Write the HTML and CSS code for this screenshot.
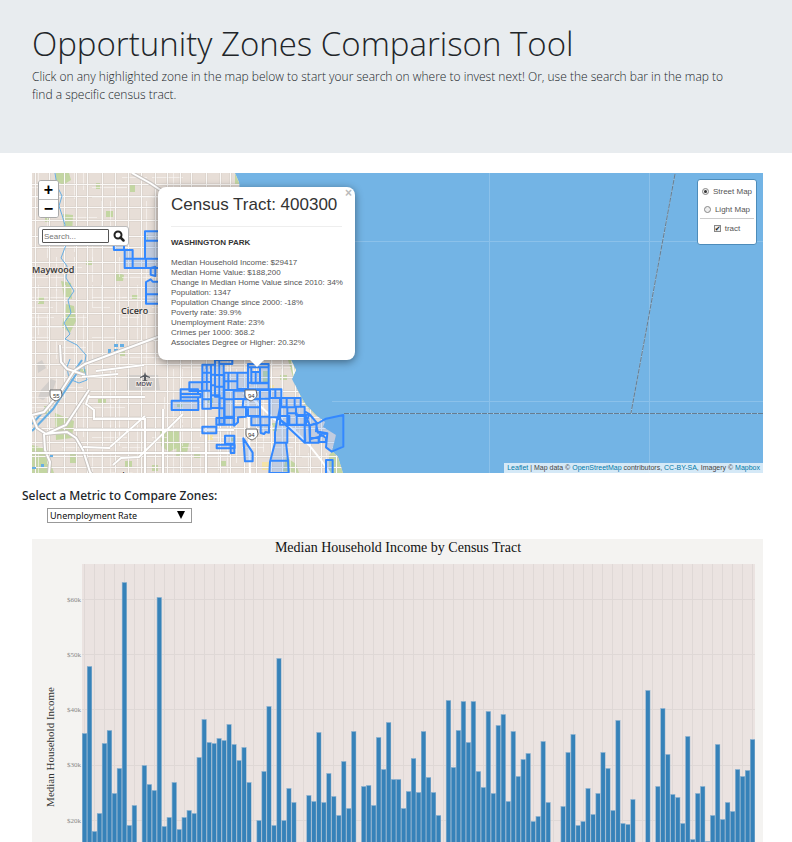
FILE: index.html
```html
<!DOCTYPE html>
<html lang="en">
<head>
<meta charset="utf-8">
<title>Opportunity Zones Comparison Tool</title>
<link rel="stylesheet" href="styles.css">
</head>
<body>
<header class="hero">
  <h1>Opportunity Zones Comparison Tool</h1>
  <p>Click on any highlighted zone in the map below to start your search on where to invest next! Or, use the search bar in the map to find a specific census tract.</p>
</header>
<main>
  <section class="map" aria-label="Map">
    <svg class="tiles" viewBox="0 0 731 300" preserveAspectRatio="xMinYMin slice" aria-hidden="true">
      <defs>
        <clipPath id="land"><path d="M0 0H203L207 9 209 30 225 80 246 150 259 187 264 197 260 206 267 220 274 232 285 243 293 249 291 254 304 262 300 278 306 284 311 300H0Z"/></clipPath>
      </defs>
      <rect width="731" height="300" fill="#73b4e5"/>
      <g clip-path="url(#land)">
        <rect width="320" height="300" fill="#e7ded7"/>
        <g class="park">
          <path d="M24 0h13l2 7-8 5-7-4zM31 41l10 1-1 20-8-2zM33 54l10 3-3 12-7-2zM29 108l10 2 1 16-8-2zM34 131l8 2 2 15-6 12-8-6zM0 272l14 4 8 24H0zM23 240l19 8-2 17-16 2zM128 258l19-3v19l-10 5-8-6zM145 269l12 1-2 10-11 4zM254 180h8l5 25 13 25 8 9-4 4-12-12-9-20zM297 282l7-7 7 25h-14zM254 284l10 7 3 9-16-2zM203 0l5 12h-5zM74 38h7v6h-7zM84 99l8 3-1 6h-8zM6 124h6v7H6zM231 198h6v13h-6zM248 202h7v5h-7zM12 233h6v8h-6z"/>
          <path d="M98 12h5v7h-5zM54 88h6v4h-6zM112 62h4v6h-4zM66 226h8v5h-8zM93 288h7v6h-7zM162 280h7v5h-7zM48 196h6v5h-6zM176 225h5v5h-5zM13 42h5v7h-5zM100 122h6v4h-6zM64 10h4v6h-4zM88 178h5v5h-5zM145 230h6v4h-6zM198 262h5v6h-5zM240 250h5v8h-5zM38 280h6v10h-6zM120 292h6v6h-6zM188 288h6v5h-6z"/>
        </g>
        <path d="M9 217l10-11 5 2-4 12-9 7-5-2zM5 190l5-3 4 8-8 5zM95 202h31l2 15H95z" fill="#d2cecb"/>
        <path d="M230 289h7v8h-7zM176 262h5v5h-5zM236 212h6v4h-6z" fill="#f4e3a8"/>
        <g id="streets" class="streets"></g>
        <g class="river">
          <path d="M23 0l2 13 5 10-3 10 3 9 3 10-4 8 5 12-5 13 6 8-1 12 8 13-6 9 3 13-7 10 6 11-5 5 12 6 9 10-2 13 3 12-8 3-10-4-2-12 3-8"/>
          <path class="canal" d="M0 258L21 236 51 191 87 178 126 164M0 251L21 228 50 187"/>
        </g>
        <path d="M82 171h4v3h-4zM88 171h4v3h-4zM82 176h4v3h-4zM76 176h3v4h-3zM0 294h4v2H0zM9 291h3v3H9zM18 282h3v2h-3z" fill="#66aee3"/>
        <path class="road-case" d="M28 172l1 17 6 7 18 6M0 242l12-3 16-19 14-22 11-7 78-29M0 243l5 12 9 6 8-1 13-1 9 6 7 12 7 22 9 11M12 261l1 16 5 12-1 11M100 0l18 10 27 18M14 261l20-9 23-35"/>
        <path class="road" d="M28 172l1 17 6 7 18 6M0 242l12-3 16-19 14-22 11-7 78-29M0 243l5 12 9 6 8-1 13-1 9 6 7 12 7 22 9 11M12 261l1 16 5 12-1 11M100 0l18 10 27 18M14 261l20-9 23-35M211 220l12 8 19 18 19 10 16 16 12 15 9 13M216 220l2 80M260 187l4 25 12 20 16 12"/>
        <path class="minor-case" d="M57 222l-3 9 8 6v9h51v54M113 243l-35 31M78 275l-27-1M151 241l-44 43-18 1-8 7M50 204l36-3M112 192l-48 6M57 224h56M131 236v64M174 196v104M0 280h200M42 257h160"/>
        <path class="minor" d="M57 222l-3 9 8 6v9h51v54M113 243l-35 31M78 275l-27-1M151 241l-44 43-18 1-8 7M50 204l36-3M112 192l-48 6M57 224h56M131 236v64M174 196v104M0 280h200M42 257h160"/>
      </g>
      <path class="tile-lines" d="M457.500 0V300M617.500 0V300M204 68.500H731M300 228.500H731"/>
      <path class="state-light" d="M643 1L599 240M312 240.500H731"/>
      <path class="state" d="M643 1L599 240M312 240.500H731"/>
      <g class="zones" transform="translate(128 177) scale(.333333)">
        <path d="M88 97h38v26H88zM62 118h52v14H62zM62 132h60v10H62zM62 142h52v10H62zM35 152h80v28H35z"/>
        <path d="M127 44h13v24h-13zM140 44h13v24h-13zM127 68h13v28h-13zM140 68h13v28h-13zM127 96h13v26h-13zM140 96h13v26h-13zM127 122h26v26h-26zM127 148h26v28h-26zM153 44h12v30h-12zM165 30h13v45h-13zM178 42h13v33h-13zM178 30h39v12h-39zM153 74h12v32h-12zM165 75h13v35h-13zM178 75h13v35h-13zM153 106h12v30h-12zM165 110h13v30h-13zM178 110h13v35h-13zM153 136h26v38h-26zM178 145h15v30h-15zM178 175h15v48h-15z"/>
        <path d="M193 68h12v26h-12zM205 68h27v26h-27zM193 94h12v26h-12zM205 94h27v26h-27zM193 120h28v28h-28zM193 148h28v52h-28zM221 122h36v25h-36zM232 68h32v49h-32zM222 172h36v28l-24 2v15l-12 10zM169 204h24v20h-24zM193 204h28v20h-28zM127 230h42v20h-42zM195 257h28v24h-28zM170 284h54v11h-54zM212 281h11v28h-11z"/>
        <path d="M264 42h62v10h-62zM264 52h10v46h-10zM274 66h13v34h-13zM287 66h13v34h-13zM300 52h26v48h-26zM264 98h62v20h-62zM256 120h44v26h-44zM300 120h28v26h-28zM330 118h16v26h-16zM346 118h18v26h-18zM250 148h50v24l-52-1zM264 172h36v26h-36zM274 200h27v26h-27zM301 200h27v26h-27zM328 144h32v28l-6 30h-26zM302 226h25v22l-10-2-5 6-10-3z"/>
        <path d="M364 144h16v26h-16zM380 144h24v28h-24zM404 144h18v26h-18zM360 172h22v26h-22zM382 172h26v18h-26zM408 170h26v25h-26zM360 198h28v26h-28zM382 190h28v34h-28zM410 198h24v26h-24zM352 204l30 22v52h-37v-30zM355 205l27 20h52v53zM434 184l14 8-12 34zM448 192l22 26-20 8-14-30zM434 225l14 1 2 52h-14zM450 226l18-4 6 26 26 2-22 10-28 8zM450 264h26v14h-26zM480 252l18 12v12h-22zM470 222l28-16 52-11v95l-35 15-17-13 4-42-34-6zM345 278h33l6 52 2 39h-58l2-34zM330 332h54M250 265l28 43v26h-23zM498 330h20v42h-20z"/>
      </g>
      <g class="zones" transform="translate(-2 -3) scale(.333333)">
        <path d="M345 184h55v28h-55zM345 212h55v54h-55zM250 210h32v30h-30zM284 240h24v26h-24zM284 266h24v28h-24zM308 266h40v28h-40zM348 266h45v28h-45zM362 294l14-4v28l-14-4zM348 336l14-8 6 7h30v38h-50zM348 373h50v28h-50z"/>
      </g>
      <g class="shield"><path d="M18 217h11l1 5c-1 4-4 5-6 6-3-1-6-3-6-6zM213 217h11l1 5c-1 4-4 5-6 6-3-1-6-3-6-6zM214 256h11l1 5c-1 4-4 5-6 6-3-1-6-3-6-6z"/><text x="21" y="225">55</text><text x="216" y="225">94</text><text x="216" y="264">94</text></g>
      <path d="M113 199l1 3 4 2v1l-4-1v3l2 1h-6l2-1v-3l-4 1v-1l4-2z" fill="#565a60"/>
      <g class="places"><text x="0" y="100">Maywood</text><text x="89" y="141">Cicero</text><text x="78" y="306">Oak Lawn</text><text class="air" x="104" y="213">MDW</text></g>
    </svg>

    <div class="left-controls">
      <div class="zoom"><button type="button" aria-label="Zoom in">+</button><button type="button" aria-label="Zoom out">−</button></div>
      <form class="search"><input type="text" placeholder="Search..." aria-label="Search census tract"><button type="button" aria-label="Search"><svg viewBox="0 0 12 12" width="12" height="12"><circle cx="5" cy="5" r="3.500" fill="none" stroke="#222" stroke-width="2"/><path d="M7.500 7.500l3 3" stroke="#222" stroke-width="2.500" stroke-linecap="round"/></svg></button></form>
    </div>

    <article class="popup">
      <button type="button" class="close" aria-label="Close">×</button>
      <h2>Census Tract: 400300</h2>
      <hr>
      <h3>WASHINGTON PARK</h3>
      <p>Median Household Income: $29417<br>Median Home Value: $188,200<br>Change in Median Home Value since 2010: 34%<br>Population: 1347<br>Population Change since 2000: -18%<br>Poverty rate: 39.9%<br>Unemployment Rate: 23%<br>Crimes per 1000: 368.2<br>Associates Degree or Higher: 20.32%</p>
    </article>

    <form class="layers">
      <label><input type="radio" name="base" checked>Street Map</label>
      <label><input type="radio" name="base">Light Map</label>
      <hr>
      <label><input type="checkbox" checked>tract</label>
    </form>
    <div class="credit"><a href="#">Leaflet</a> | Map data © <a href="#">OpenStreetMap</a> contributors, <a href="#">CC-BY-SA</a>, Imagery © <a href="#">Mapbox</a></div>
  </section>

  <section class="metric">
    <label for="metric">Select a Metric to Compare Zones:</label>
    <div class="select"><select id="metric"><option>Unemployment Rate</option></select><svg viewBox="0 0 8 8" width="8" height="8" aria-hidden="true"><path d="M0 0h8L4 8z"/></svg></div>
  </section>

  <svg class="chart" viewBox="0 0 731 303" role="img" aria-label="Median Household Income by Census Tract">
    <rect width="731" height="303" fill="#f4f3f1"/>
    <rect x="50" y="25" width="673" height="278" fill="#ebe3e1"/>
    <g id="grid" class="grid"></g>
    <g id="bars"></g>
    <text class="chart-title" x="366" y="13">Median Household Income by Census Tract</text>
    <text class="axis-title" transform="translate(22 208) rotate(-90)">Median Household Income</text>
    <g class="ticks"><text x="49" y="63">$60k</text><text x="49" y="118">$50k</text><text x="49" y="173">$40k</text><text x="49" y="228">$30k</text><text x="49" y="284">$20k</text></g>
  </svg>
</main>
<script src="app.js"></script>
</body>
</html>
```
FILE: styles.css
```css
* { box-sizing: border-box; }
body { margin: 0; background: #fff; color: #212529; font-family: "Open Sans", "Noto Sans", sans-serif; }
button, input, select { font: inherit; margin: 0; }

.hero { background: #e8ecef; height: 153px; padding: 20px 60px 0 32px; font-weight: 300; }
.hero h1 { margin: 0; font-size: 33px; line-height: 48px; font-weight: 300; white-space: nowrap; }
.hero p { margin: 0; font-size: 12px; line-height: 18px; }

main { padding: 20px 29px 0 32px; }
.map { position: relative; height: 300px; overflow: hidden; font-family: "Liberation Sans", Arial, sans-serif; font-size: 8px; color: #444; }
.tiles { display: block; width: 100%; height: 100%; }
.park { fill: #c3d6a2; }
.streets { fill: none; stroke: #fbf9f7; stroke-width: 1; }
.streets .casing { stroke: #c6bfb9; stroke-width: 2; }
.river { fill: none; stroke: #66aee3; stroke-width: 1; }
.river .canal { stroke-width: 2; }
.road-case { fill: none; stroke: #c9c4c0; stroke-width: 4; }
.road { fill: none; stroke: #fff; stroke-width: 2; }
.minor-case { fill: none; stroke: #bfb9b4; stroke-width: 3; stroke-opacity: .7; }
.minor { fill: none; stroke: #fff; stroke-width: 2; }
.tile-lines { stroke: #8bc1ea; stroke-width: 1; fill: none; }
.state-light { stroke: #a9c7dc; stroke-width: 1; fill: none; }
.state { stroke: #667d91; stroke-width: 1; stroke-dasharray: 5 1; fill: none; }
.zones { fill: #3388ff; fill-opacity: .2; stroke: #3388ff; stroke-width: 6; stroke-linejoin: round; }
.shield { fill: #fff; stroke: #666; stroke-width: 1; }
.shield text { fill: #333; stroke: none; font-size: 6px; }
.places { fill: #333; font: 600 9px "Open Sans", sans-serif; stroke: #eee7e1; stroke-width: 2; paint-order: stroke; }
.places .air { font-size: 6px; fill: #445; }

.left-controls { position: absolute; top: 7px; left: 6px; display: grid; gap: 8px; justify-items: start; }
.zoom { display: grid; width: 21px; border: 1px solid #aaa; border-radius: 3px; background: #fff; overflow: hidden; }
.zoom button { height: 18px; padding: 0; border: 0; background: #fff; color: #000; font-size: 16px; font-weight: 700; line-height: 18px; }
.zoom button + button { border-top: 1px solid #bbb; }
.search { display: flex; align-items: center; gap: 4px; width: 91px; height: 20px; padding: 3px; border: 1px solid #bbb; border-radius: 3px; background: #fff; }
.search input { width: 67px; height: 14px; padding: 0 1px; border: 1px solid #555; border-radius: 1px; color: #777; }
.search button { padding: 0; border: 0; background: none; display: flex; }

.popup { position: absolute; left: 126px; top: 14px; width: 197px; height: 173px; padding: 8px 13px; border-radius: 8px; background: #fff; box-shadow: 0 2px 9px rgba(0,0,0,.45); }
.popup::after { content: ""; position: absolute; left: 92px; top: 173px; border: 7px solid transparent; border-top-color: #fff; border-bottom: 0; }
.popup h2 { margin: 0; color: #333; font-size: 17px; line-height: 20px; font-weight: 400; white-space: nowrap; }
.popup hr { height: 1px; margin: 11px 0; border: 0; background: #eee; }
.popup h3 { margin: 0 0 10px; color: #333; font-size: 8px; line-height: 10px; font-weight: 700; }
.popup p { margin: 0; line-height: 10px; color: #555; white-space: nowrap; }
.close { position: absolute; top: 0; right: 3px; padding: 0; border: 0; background: none; color: #bbb; font-size: 12px; line-height: 12px; font-weight: 700; }

.layers { position: absolute; top: 6px; right: 6px; width: 60px; height: 66px; padding: 2px; border: 1px solid #4d8cba; border-radius: 3px; background: #fff; display: flex; flex-direction: column; align-items: center; color: #555; }
.layers label { display: flex; align-items: center; gap: 4px; height: 18px; white-space: nowrap; }
.layers input { appearance: none; width: 7px; height: 7px; border: 1px solid #888; background: #eee; display: grid; place-items: center; }
.layers input[type="radio"] { border-radius: 50%; }
.layers input[type="radio"]:checked::after { content: ""; width: 3px; height: 3px; border-radius: 50%; background: #333; }
.layers input[type="checkbox"]:checked::after { content: "✔"; color: #222; font: 7px/7px "DejaVu Sans", sans-serif; }
.layers hr { width: 100%; height: 1px; margin: 0; border: 0; background: #ccc; flex: none; }
.credit { position: absolute; right: 0; bottom: 0; padding: 0 3px; background: rgba(255,255,255,.7); font-size: 7px; line-height: 10px; white-space: nowrap; color: #444; }
.credit a { color: #0078a8; text-decoration: none; }

.metric { margin: 14px 0 0 -10px; font-family: "Noto Sans", "Open Sans", sans-serif; }
.metric label { display: block; font-size: 12px; line-height: 18px; font-weight: 500; }
.select { position: relative; width: 145px; margin: 3px 0 0 25px; }
.select select { display: block; appearance: none; width: 100%; height: 15px; padding: 0 2px; border: 1px solid #999; border-radius: 0; background: #fff; color: #111; font-size: 9px; line-height: 13px; }
.select svg { position: absolute; right: 7px; top: 3px; pointer-events: none; }

.chart { display: block; width: 100%; height: auto; margin-top: 16px; font-family: "Liberation Serif", "Times New Roman", serif; }
.grid { stroke: #dfd8d6; stroke-width: 1; }
.bar-edge { fill: #8eb2cf; }
.bar { fill: #3682b9; }
.chart-title { font-size: 14px; text-anchor: middle; fill: #111; }
.axis-title { font-size: 11px; text-anchor: middle; fill: #333; }
.ticks { font-size: 7px; text-anchor: end; fill: #888; }
```
FILE: app.js
```js
const NS = "http://www.w3.org/2000/svg";
function add(parent, tag, attrs) {
  const el = document.createElementNS(NS, tag);
  for (const key in attrs) el.setAttribute(key, attrs[key]);
  parent.appendChild(el);
}

// Bar tops in chart units; 0 marks a tract without data.
const tops = [194,127,292,274,204,191,254,229,43,286,266,0,226,245,251,58,287,278,243,290,278,271,274,218,180,203,204,199,201,185,205,221,208,243,0,281,232,167,286,119,281,249,263,0,0,256,262,193,263,234,257,276,222,269,192,0,247,246,266,198,230,183,240,240,269,252,219,253,192,238,253,276,0,161,228,191,162,203,162,232,248,172,254,186,175,262,192,237,220,214,282,277,202,263,0,0,267,213,195,286,282,249,275,254,213,229,271,181,284,285,260,0,0,151,0,247,169,215,255,258,284,197,300,254,247,302,276,205,280,263,272,230,237,231,200];
const pitch = 673 / tops.length;
const grid = document.getElementById("grid");
const bars = document.getElementById("bars");
[60.5, 115.5, 170.5, 226.5, 281.5].forEach(y => add(grid, "path", { d: `M50 ${y}H723` }));
tops.forEach((top, i) => {
  const x = 50 + i * pitch;
  if (i % 2 === 0) add(grid, "path", { d: `M${Math.floor(x + pitch / 2) + 0.5} 25V303` });
  if (!top) return;
  add(bars, "rect", { class: "bar-edge", x: x, y: top, width: pitch, height: 303 - top });
  add(bars, "rect", { class: "bar", x: x + 0.7, y: top + 1, width: pitch - 1.2, height: 302 - top });
});

// Street grid: avenues with regular spacing, blocks broken up by a seeded sequence.
const streets = document.getElementById("streets");
let seed = 17;
const rnd = () => (seed = (seed * 16807) % 2147483647) / 2147483647;
let main = "", side = "";
for (let x = 3; x < 320; x += 13) main += `M${x + 0.5 + Math.round(rnd() * 3)} 0V300`;
for (let y = 8; y < 300; y += 13) main += `M0 ${y + 0.5 + Math.round(rnd() * 3)}h320`;
for (let x = 6; x < 320; x += 9) for (let y = 0; y < 300; y += 28) if (rnd() > 0.5) side += `M${x + 0.5} ${y}v${Math.round(15 + rnd() * 25)}`;
for (let y = 4; y < 300; y += 10) for (let x = 0; x < 320; x += 30) if (rnd() > 0.65) side += `M${x} ${y + 0.5}h${Math.round(15 + rnd() * 25)}`;
add(streets, "path", { d: side, "stroke-opacity": 0.6 });
add(streets, "path", { d: main, class: "casing", "stroke-opacity": 0.5 });
add(streets, "path", { d: main });
```
